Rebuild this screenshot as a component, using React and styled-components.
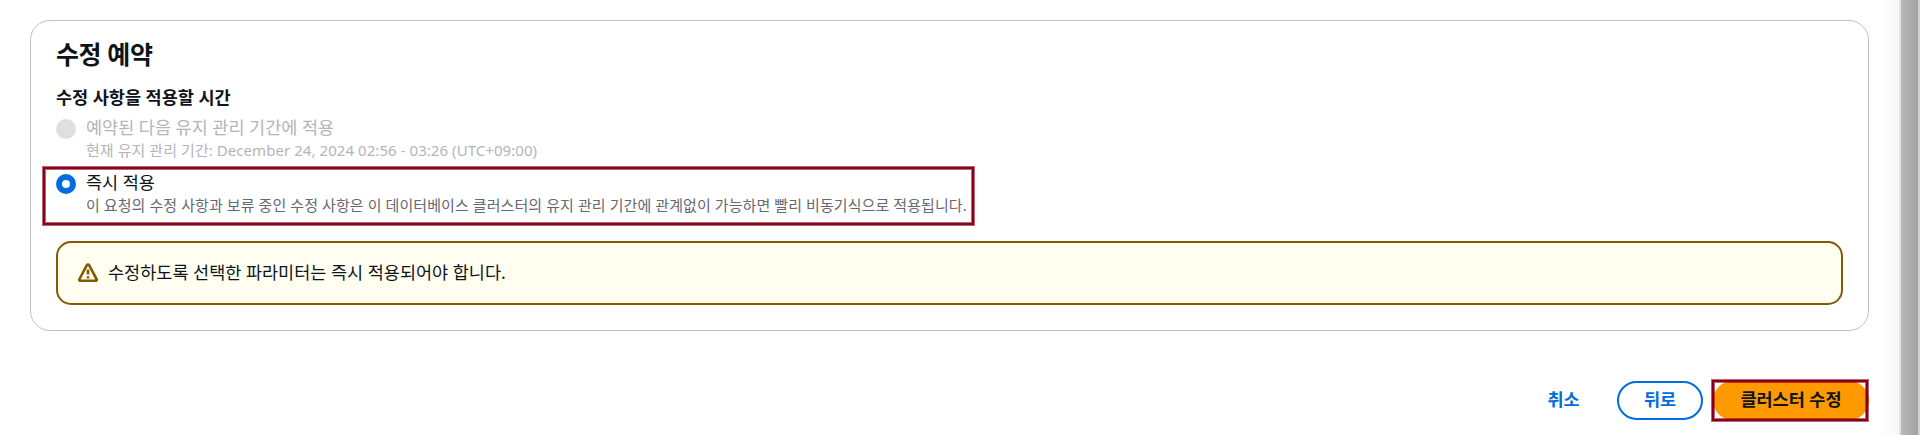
import React from 'react';
import styled, { createGlobalStyle } from 'styled-components';

const GlobalStyle = createGlobalStyle`
  * { box-sizing: border-box; }
  body {
    margin: 0;
    background: #fff;
    color: #0f141a;
    font-family: "Noto Sans", "Noto Sans CJK KR", sans-serif;
    font-size: 17.5px;
    overflow: hidden;
  }
`;

const Page = styled.div`
  display: flex;
  height: 435px;
`;

const Main = styled.main`
  flex: 1;
  min-width: 0;
  padding: 20px 0 0 30px;
`;

const Edge = styled.div`
  width: 51px;
  background: linear-gradient(to right,
    #fff 0, #fefefe 12px, #f8f8f8 30px, #e3e3e3 30px, #e3e3e3 32px,
    #b9b9b9 32px, #a2a2a2 49px, #d0d0d0 49px);
`;

const Card = styled.section`
  height: 311px;
  border: 1px solid #c0c0c8;
  border-radius: 20px;
  padding: 19px 25px 20px;
`;

const Title = styled.h2`
  margin: 0;
  font-size: 25px;
  font-weight: 700;
  line-height: 28px;
  letter-spacing: -0.38px;
  white-space: nowrap;
`;

const Label = styled.div`
  margin-top: 17px;
  font-weight: 700;
  font-size: 17.5px;
  line-height: 25px;
`;

const Option = styled.label`
  position: relative;
  display: flex;
  gap: 10px;
  height: 55px;
  padding-top: 5px;
  color: ${(p) => (p.$disabled ? '#b4b4bb' : '#0f141a')};
`;

const Radio = styled.span`
  width: 20px;
  height: 20px;
  margin-top: 4px;
  border-radius: 50%;
  background: ${(p) => (p.$checked ? '#fff' : '#dedee3')};
  border: ${(p) => (p.$checked ? '6px solid #006ce0' : '0')};
`;

const OptionText = styled.span`
  display: flex;
  flex-direction: column;
  white-space: nowrap;
  line-height: 25px;
`;

const Hint = styled.span`
  font-size: 15px;
  line-height: 20px;
  letter-spacing: ${(p) => (p.$disabled ? '0.06px' : '0.08px')};
  color: ${(p) => (p.$disabled ? '#b4b4bb' : '#656871')};
`;

const Marker = styled.span`
  position: absolute;
  inset: ${(p) => p.$inset};
  border: 2px solid #8a0018;
  box-shadow: 0 0 0 1px rgba(138, 0, 24, 0.6), inset 0 0 0 1px rgba(138, 0, 24, 0.6);
  pointer-events: none;
`;

const Alert = styled.div`
  display: flex;
  align-items: center;
  gap: 10px;
  height: 64px;
  margin-top: 21px;
  padding: 0 20px;
  border: 2px solid #855900;
  border-radius: 15px;
  background: #fffef0;
`;

const AlertText = styled.span`
  line-height: 25px;
  padding-bottom: 1px;
`;

const WarningIcon = styled.svg`
  width: 20px;
  height: 20px;
  fill: none;
  stroke: #855900;
  stroke-width: 2.6;
`;

const Actions = styled.div`
  display: flex;
  justify-content: flex-end;
  gap: 10px;
  margin-top: 50px;
`;

const Button = styled.button`
  position: relative;
  height: 39px;
  width: ${(p) => p.$width};
  padding: 0 0 2px;
  border: 2px solid ${(p) => (p.$kind === 'normal' ? '#006ce0' : 'transparent')};
  border-radius: 20px;
  background: ${(p) => (p.$kind === 'primary' ? '#ff9900' : 'transparent')};
  color: ${(p) => (p.$kind === 'primary' ? '#0f141a' : '#006ce0')};
  font-family: inherit;
  font-size: 17.5px;
  font-weight: 700;
  line-height: 25px;
  white-space: nowrap;
`;

export default function App() {
  return (
    <Page>
      <GlobalStyle />
      <Main>
        <Card>
          <Title>수정 예약</Title>
          <Label>수정 사항을 적용할 시간</Label>
          <Option $disabled>
            <Radio />
            <OptionText>
              예약된 다음 유지 관리 기간에 적용
              <Hint $disabled>현재 유지 관리 기간: December 24, 2024 02:56 - 03:26 (UTC+09:00)</Hint>
            </OptionText>
          </Option>
          <Option>
            <Radio $checked />
            <OptionText>
              즉시 적용
              <Hint>
                이 요청의 수정 사항과 보류 중인 수정 사항은 이 데이터베이스 클러스터의 유지 관리 기간에 관계없이 가능하면 빨리 비동기식으로 적용됩니다.
              </Hint>
            </OptionText>
            <Marker $inset="2px 869px -5px -13px" />
          </Option>
          <Alert>
            <WarningIcon viewBox="0 0 20 20">
              <path d="M8.9 2.2 1.5 16c-.5.9.1 1.8 1 1.8h15c.9 0 1.5-.9 1-1.8L11.1 2.2c-.5-.9-1.7-.9-2.2 0Z" />
              <path d="M10 6.6v5M10 13.2v2.2" />
            </WarningIcon>
            <AlertText>수정하도록 선택한 파라미터는 즉시 적용되어야 합니다.</AlertText>
          </Alert>
        </Card>
        <Actions>
          <Button $kind="link" $width="87px">취소</Button>
          <Button $kind="normal" $width="86px">뒤로</Button>
          <Button $kind="primary" $width="156px">
            클러스터 수정
            <Marker $inset="-3px -1px -3px -3px" />
          </Button>
        </Actions>
      </Main>
      <Edge />
    </Page>
  );
}
